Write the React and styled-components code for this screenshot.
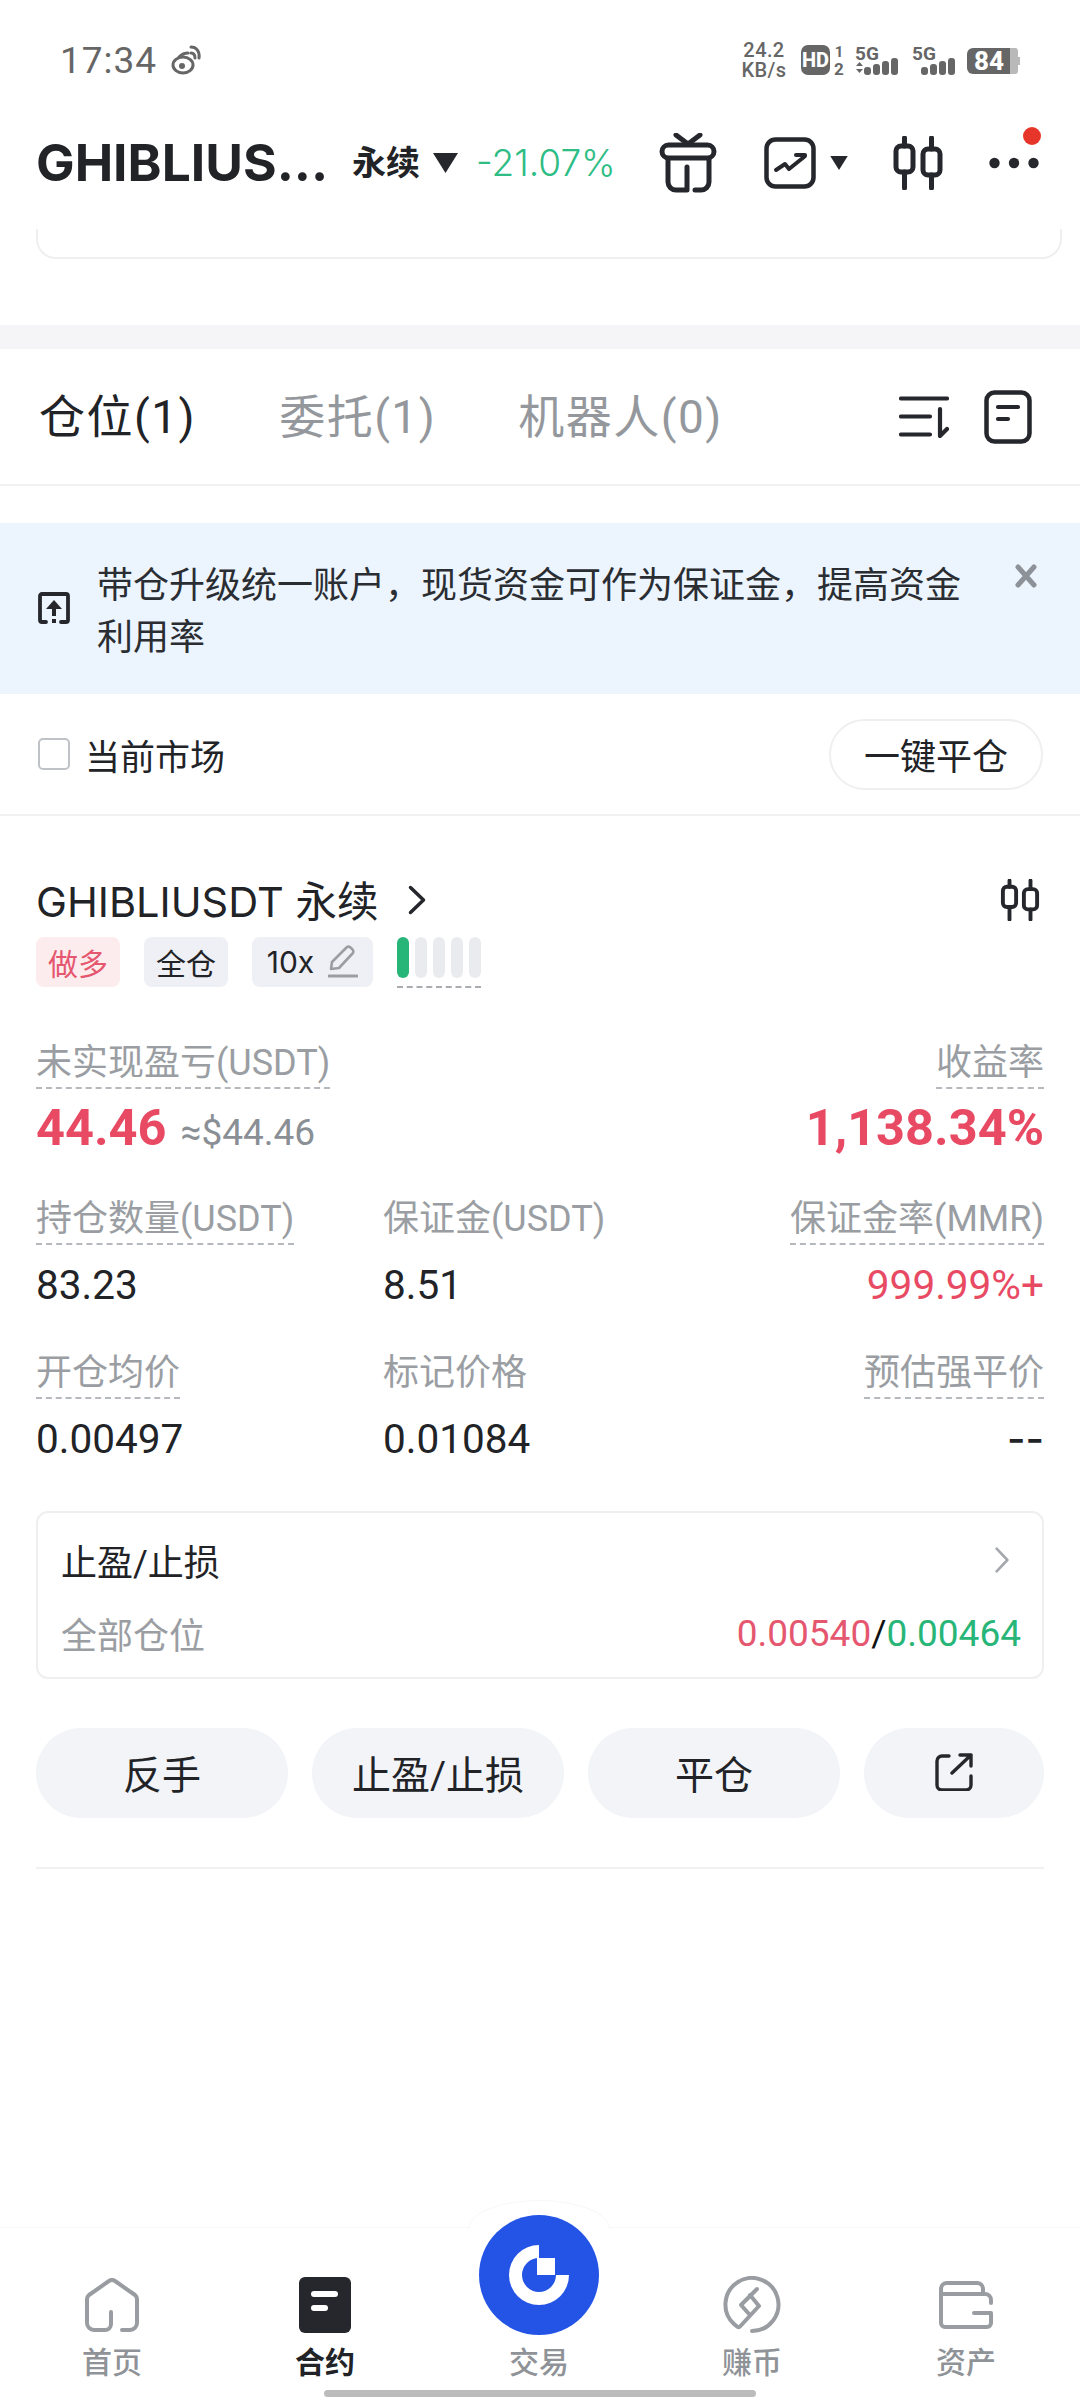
import React from "react";
import styled, { createGlobalStyle } from "styled-components";

const Global = createGlobalStyle`
  html, body { margin: 0; padding: 0; background: #fff; }
  * { box-sizing: border-box; }
  body { font-family: Roboto, "Noto Sans CJK SC", "Liberation Sans", sans-serif; color: #212327; }
`;

const inter = `Inter, "Noto Sans CJK SC", sans-serif`;

const Page = styled.div`
  width: 1080px;
  height: 2400px;
  position: relative;
  overflow: hidden;
  display: flex;
  flex-direction: column;
  background: #fff;
`;

/* status bar */
const StatusBar = styled.div`
  height: 116px;
  padding: 4px 59px 0 60px;
  display: flex;
  align-items: center;
  justify-content: space-between;
  color: #666;
`;
const Clock = styled.div`
  display: flex;
  align-items: center;
  gap: 14px;
  font-size: 37px;
  letter-spacing: 1px;
`;
const StatusRight = styled.div`
  display: flex;
  align-items: center;
`;
const NetSpeed = styled.div`
  width: 46px;
  margin-right: 14px;
  text-align: center;
  font-size: 20px;
  font-weight: 500;
  line-height: 20px;
  white-space: nowrap;
  letter-spacing: 0.4px;
`;

/* header */
const Header = styled.div`
  height: 100px;
  padding: 0 41px 0 36px;
  display: flex;
  align-items: center;
  margin-top: -3px;
  position: relative;
`;
const Symbol = styled.div`
  width: 290px;
  margin-top: -2px;
  font-family: ${inter};
  font-size: 51.5px;
  font-weight: 700;
  white-space: nowrap;
`;
const Perp = styled.div`
  margin-left: 26px;
  margin-top: -5px;
  font-size: 34px;
  font-weight: 600;
  white-space: nowrap;
`;
const Change = styled.div`
  margin-left: 17px;
  margin-top: -2px;
  width: 140px;
  font-family: ${inter};
  font-size: 37px;
  color: #2ebd85;
  white-space: nowrap;
  font-weight: 300;
`;
const HeaderIcons = styled.div`
  margin-left: auto;
  display: flex;
  align-items: center;
`;
const Spacer = styled.span`
  width: ${(p) => p.$w}px;
`;
const Notify = styled.span`
  position: absolute;
  left: 1023px;
  top: 14px;
  width: 18px;
  height: 18px;
  border-radius: 50%;
  background: #e6352b;
`;

/* remains of card scrolled under the header */
const ScrolledCard = styled.div`
  margin: 16px 18px 0 36px;
  height: 30px;
  border: 2px solid #eeeff1;
  border-top: 0;
  border-radius: 0 0 20px 20px;
`;
const Band = styled.div`
  margin-top: 66px;
  height: 24px;
  background: #f5f5f7;
`;

/* tabs */
const Tabs = styled.div`
  height: 137px;
  padding: 0 48px 0 39px;
  display: flex;
  align-items: center;
  border-bottom: 2px solid #f0f1f3;
`;
const Tab = styled.div`
  font-size: 46px;
  letter-spacing: 1.5px;
  margin-top: -8px;
  margin-right: ${(p) => p.$gap}px;
  color: ${(p) => (p.$active ? "#212327" : "#94989d")};
  white-space: nowrap;
`;
const TabIcons = styled.div`
  margin-left: auto;
  display: flex;
  align-items: center;
  gap: 35px;
`;

/* banner */
const Banner = styled.div`
  margin-top: 37px;
  height: 171px;
  padding: 37px 42px 0 38px;
  background: #ecf4fd;
  display: flex;
  position: relative;
`;
const BannerIcon = styled.div`
  width: 59px;
  flex: none;
  padding-top: 32px;
`;
const BannerText = styled.div`
  width: 880px;
  font-size: 36px;
  line-height: 52px;
  color: #2a2d32;
`;
const CloseBtn = styled.div`
  position: absolute;
  left: 1014px;
  top: 41px;
  line-height: 0;
`;

/* filter */
const FilterRow = styled.div`
  height: 122px;
  padding: 0 37px 0 38px;
  display: flex;
  align-items: center;
  border-bottom: 2px solid #f0f1f3;
`;
const Check = styled.span`
  width: 32px;
  height: 32px;
  border: 2.5px solid #bfc2c6;
  border-radius: 5px;
  margin-right: 15px;
`;
const CheckLabel = styled.span`
  font-size: 35px;
`;
const CloseAll = styled.div`
  margin-left: auto;
  width: 214px;
  height: 71px;
  border: 2px solid #eeeff1;
  border-radius: 36px;
  display: flex;
  align-items: center;
  justify-content: center;
  font-size: 36px;
`;

/* position */
const Position = styled.div`
  padding: 0 36px;
`;
const PosHead = styled.div`
  height: 70px;
  margin-top: 49px;
  display: flex;
  align-items: center;
`;
const PosName = styled.div`
  font-family: ${inter};
  font-size: 41.5px;
  margin-top: -2px;
  white-space: nowrap;
`;
const PosIcon = styled.span`
  margin-left: auto;
  margin-right: 4px;
  line-height: 0;
`;
const TagRow = styled.div`
  margin-top: 2px;
  height: 50px;
  display: flex;
  align-items: flex-start;
`;
const Tag = styled.div`
  height: 50px;
  width: ${(p) => p.$w}px;
  margin-right: 24px;
  border-radius: 8px;
  background: ${(p) => (p.$red ? "#fdecee" : "#eff0f5")};
  color: ${(p) => (p.$red ? "#e5566f" : "#212327")};
  font-family: ${inter};
  font-size: 30px;
  display: flex;
  align-items: center;
  justify-content: center;
  gap: 14px;
`;
const Meter = styled.div`
  width: 84px;
  height: 51px;
  padding-bottom: 8px;
  display: flex;
  gap: 6px;
  border-bottom: 2px dashed #a8abaf;
`;
const MeterBar = styled.span`
  width: 12px;
  border-radius: 6px;
  background: ${(p) => (p.$on ? "#27b678" : "#e9ebee")};
`;

const StatsRow = styled.div`
  display: grid;
  grid-template-columns: ${(p) => p.$cols || "347px 1fr auto"};
  margin-top: ${(p) => p.$mt}px;
`;
const Stat = styled.div`
  display: flex;
  flex-direction: column;
  align-items: ${(p) => (p.$right ? "flex-end" : "flex-start")};
`;
const Label = styled.span`
  font-size: 36px;
  line-height: 42px;
  color: #9a9ea3;
  white-space: nowrap;
  padding-bottom: 3px;
  border-bottom: 2px ${(p) => (p.$plain ? "solid transparent" : "dashed #b5b8bc")};
`;
const Value = styled.span`
  margin-top: 17px;
  font-size: 40.5px;
  line-height: 46px;
  color: ${(p) => (p.$red ? "#e84a63" : "#212327")};
  white-space: nowrap;
`;
const DashValue = styled(Value)`
  font-family: ${inter};
  font-weight: 500;
  font-size: 40px;
`;
const BigValue = styled.div`
  margin-top: 11px;
  height: 56px;
  display: flex;
  align-items: baseline;
  line-height: 56px;
  gap: 14px;
  color: #e84a63;
  font-size: 50.5px;
  font-weight: 700;
  white-space: nowrap;
`;
const Fiat = styled.span`
  font-size: 37px;
  font-weight: 400;
  color: #8a8f95;
`;

/* TP/SL */
const TpSl = styled.div`
  margin-top: 49px;
  height: 168px;
  border: 2px solid #eeeff1;
  border-radius: 12px;
  padding: 24px 21px 0 23px;
`;
const TpRow = styled.div`
  display: flex;
  align-items: center;
  justify-content: space-between;
  height: 46px;
  margin-bottom: ${(p) => p.$mb || 0}px;
`;
const TpTitle = styled.span`
  font-size: 36px;
`;
const TpLabel = styled.span`
  font-size: 36px;
  color: #9a9ea3;
`;
const TpValues = styled.span`
  font-size: 37px;
  color: #111;
`;
const TpPrice = styled.span`
  color: ${(p) => p.$c};
`;
const TpArrow = styled.span`
  margin-right: 11px;
  line-height: 0;
`;

/* actions */
const Actions = styled.div`
  margin-top: 49px;
  display: grid;
  grid-template-columns: 252px 252px 252px 1fr;
  gap: 24px;
`;
const ActionBtn = styled.div`
  height: 90px;
  padding-bottom: 2px;
  border-radius: 45px;
  background: #f2f4f7;
  display: flex;
  align-items: center;
  justify-content: center;
  font-size: 39px;
  color: #212327;
`;
const Rule = styled.div`
  margin-top: 49px;
  height: 2px;
  background: #f0f1f3;
`;

/* nav */
const Nav = styled.div`
  position: absolute;
  left: 0;
  right: 0;
  bottom: 0;
  height: 173px;
  border-top: 1px solid #f7f7f8;
  background: #fff;
  display: grid;
  grid-template-columns: 224px 202px 226px 200px 228px;
`;
const NavItem = styled.div`
  display: flex;
  flex-direction: column;
  align-items: center;
  padding-top: ${(p) => p.$pt || 49}px;
`;
const IconSlot = styled.div`
  height: 56px;
  display: flex;
  align-items: center;
  margin-bottom: 12px;
`;
const NavLabel = styled.span`
  font-size: 30px;
  line-height: 36px;
  font-weight: ${(p) => (p.$active ? 600 : 500)};
  color: ${(p) => (p.$active ? "#212327" : "#8f9398")};
`;
const Bump = styled.div`
  position: absolute;
  left: 468px;
  top: -28px;
  width: 142px;
  height: 29px;
  background: #fff;
  border: 1px solid #f7f7f8;
  border-bottom: 0;
  border-radius: 71px 71px 0 0 / 29px 29px 0 0;
`;
const TradeFab = styled.div`
  position: absolute;
  left: 479px;
  top: -13px;
  width: 120px;
  height: 120px;
  border-radius: 50%;
  background: #2354e6;
  display: flex;
  align-items: center;
  justify-content: center;
`;
const HomeBar = styled.div`
  position: absolute;
  left: 324px;
  top: 2390px;
  width: 432px;
  height: 7px;
  border-radius: 4px;
  background: #bcbcbc;
`;

const ink = "#25272c";
const gray = "#999ca1";

const Weibo = () => (
  <svg width="32" height="32" viewBox="0 0 32 32" fill="none" stroke="#666" strokeWidth="3" strokeLinecap="round">
    <ellipse cx="12" cy="21" rx="10" ry="8" />
    <circle cx="11" cy="22" r="3" fill="#666" stroke="none" />
    <path d="M8 13c3-3 6-4 9-4M20 3c5 0 9 4 8 11M20 9c3 0 4 2 4 5" />
  </svg>
);

const SignalBars = ({ x }) => (
  <>
    <rect x={x} y="24" width="7" height="8" rx="3" />
    <rect x={x + 9} y="21" width="7" height="11" rx="3" />
    <rect x={x + 18} y="18" width="7" height="14" rx="3" />
    <rect x={x + 27} y="15" width="7" height="17" rx="3" />
  </>
);

const StatusIcons = () => (
  <svg width="220" height="38" viewBox="0 -2 220 38" style={{ display: "block" }}>
    <g fill="#666" fontFamily="Roboto">
      <rect x="0" y="2" width="29" height="30" rx="7" />
      <text x="14.5" y="24" textAnchor="middle" fontSize="20" fontWeight="800" fill="#fff">HD</text>
      <text x="38" y="14" textAnchor="middle" fontSize="15" fontWeight="700">1</text>
      <text x="38" y="32" textAnchor="middle" fontSize="17" fontWeight="700">2</text>
      <text x="54" y="17" fontSize="19" fontWeight="700">5G</text>
      <path d="M55 23l3.5-4 3.5 4zM55 26h7l-3.5 4z" />
      <SignalBars x={63} />
      <text x="111" y="17" fontSize="19" fontWeight="700">5G</text>
      <SignalBars x={120} />
      <path d="M166 11a6 6 0 0 1 6-6h37v26h-37a6 6 0 0 1-6-6z" />
      <path d="M209 5h5a3 3 0 0 1 3 3v6h2v8h-2v6a3 3 0 0 1-3 3h-5z" fill="#b9b9b9" />
      <text x="188" y="27" textAnchor="middle" fontSize="26" fontWeight="800" fill="#fff">84</text>
    </g>
  </svg>
);

const Triangle = ({ w, h, ml = 0 }) => (
  <svg width={w} height={h} viewBox="0 0 10 8" style={{ marginLeft: ml, flex: "none" }}>
    <path d="M0 0h10L5 8z" fill={ink} />
  </svg>
);

const Gift = () => (
  <svg width="58" height="60" viewBox="0 0 58 60" fill="none" stroke={ink} strokeWidth="5" strokeLinecap="round" strokeLinejoin="round">
    <path d="M17 2l12 9 12-9" />
    <rect x="3" y="12" width="52" height="13" rx="6.5" />
    <path d="M9 26v23a8 8 0 0 0 8 8h11V34M36 57h6a8 8 0 0 0 8-8V26" />
  </svg>
);

const TrendBox = () => (
  <svg width="52" height="52" viewBox="0 0 52 52" fill="none" stroke={ink} strokeLinecap="round" strokeLinejoin="round">
    <rect x="2.5" y="2.5" width="47" height="47" rx="9" strokeWidth="4.5" />
    <path d="M12 33l9-6 4 5 15-12" strokeWidth="4" />
    <path d="M32 18h9v1" strokeWidth="4" />
  </svg>
);

const Candles = ({ w = 50, h = 54 }) => (
  <svg width={w} height={h} viewBox="0 0 50 54" fill="none" stroke={ink} strokeWidth="5" strokeLinecap="round" strokeLinejoin="round">
    <rect x="3" y="10" width="17" height="26" rx="5" />
    <path d="M11.5 2v8M11.5 36v16" />
    <rect x="30" y="13" width="17" height="26" rx="5" />
    <path d="M38.5 2v11M38.5 39v13" />
  </svg>
);

const Dots = () => (
  <svg width="50" height="12" viewBox="0 0 50 12">
    <circle cx="5.5" cy="6" r="5.2" fill={ink} />
    <circle cx="25" cy="6" r="5.2" fill={ink} />
    <circle cx="44.5" cy="6" r="5.2" fill={ink} />
  </svg>
);

const SortIcon = () => (
  <svg width="50" height="42" viewBox="0 0 50 42" fill="none" stroke={ink} strokeWidth="4.2" strokeLinecap="round" strokeLinejoin="round">
    <path d="M2 2.5h46M2 20.5h29M2 38.5h29" />
    <path d="M41 13v27l7-7" />
  </svg>
);

const NoteIcon = () => (
  <svg width="48" height="54" viewBox="0 0 48 54" fill="none" stroke={ink} strokeLinecap="round">
    <rect x="2.5" y="2.5" width="43" height="49" rx="8" strokeWidth="4.5" />
    <path d="M14 17h20M14 29h10" strokeWidth="4.2" />
  </svg>
);

const UpgradeIcon = () => (
  <svg width="32" height="32" viewBox="0 0 32 32" fill="none" stroke={ink} strokeLinejoin="round">
    <path d="M8 30H4a2 2 0 0 1-2-2V4a2 2 0 0 1 2-2h24a2 2 0 0 1 2 2v24a2 2 0 0 1-2 2h-5" strokeWidth="3.8" strokeLinecap="round" />
    <path d="M16 8l8 9H8z" fill={ink} stroke="none" />
    <path d="M16 16v8M16 27v4" strokeWidth="4" />
  </svg>
);

const CloseIcon = () => (
  <svg width="24" height="24" viewBox="0 0 24 24" fill="none" stroke="#8d9299" strokeWidth="5" strokeLinecap="round">
    <path d="M4 3l16 18M20 3L4 21" />
  </svg>
);

const Chevron = ({ w, h, c, sw, ml = 0 }) => (
  <svg width={w} height={h} viewBox={`0 0 ${w} ${h}`} fill="none" stroke={c} strokeWidth={sw} strokeLinecap="round" strokeLinejoin="round" style={{ marginLeft: ml, flex: "none" }}>
    <path d={`M${sw} ${sw}L${w - sw} ${h / 2}L${sw} ${h - sw}`} />
  </svg>
);

const Pencil = () => (
  <svg width="30" height="34" viewBox="0 0 30 34" fill="none" stroke="#9a9ea3" strokeLinecap="round" strokeLinejoin="round">
    <path d="M3 24l1-7L18 3a3 3 0 0 1 5 0l1 1a3 3 0 0 1 0 5L11 23z" strokeWidth="2.6" />
    <path d="M1 31h28" strokeWidth="3" />
  </svg>
);

const ShareIcon = () => (
  <svg width="38" height="38" viewBox="0 0 38 38" fill="none" stroke={ink} strokeWidth="3.4" strokeLinecap="round" strokeLinejoin="round">
    <path d="M14 3H7a5 5 0 0 0-5 5v24a5 5 0 0 0 5 5h24a5 5 0 0 0 5-5v-9" />
    <path d="M17 20L36 2M25 2h11v11" />
  </svg>
);

const HomeIcon = () => (
  <svg width="54" height="54" viewBox="0 0 54 54" fill="none" stroke={gray} strokeWidth="4" strokeLinecap="round" strokeLinejoin="round">
    <path d="M37 52h8a7 7 0 0 0 7-7V22a6 6 0 0 0-2-5L30 3a5 5 0 0 0-6 0L4 17a6 6 0 0 0-2 5v23a7 7 0 0 0 7 7h11a6 6 0 0 0 6-6V34" />
  </svg>
);

const ContractIcon = () => (
  <svg width="52" height="56" viewBox="0 0 52 56">
    <rect width="52" height="56" rx="6" fill={ink} />
    <rect x="12" y="14" width="27" height="6" rx="3" fill="#fff" />
    <rect x="12" y="28" width="17" height="6" rx="3" fill="#fff" />
  </svg>
);

const EarnIcon = () => (
  <svg width="58" height="58" viewBox="0 0 58 58" fill="none" stroke={gray} strokeWidth="4" strokeLinecap="round" strokeLinejoin="round">
    <path d="M29 55A26.5 26.5 0 1 0 11 48l3 2.5a2 2 0 0 0 3 0L36 30 27 19" />
    <path d="M34 13L18 29l8 9" />
  </svg>
);

const WalletIcon = () => (
  <svg width="54" height="48" viewBox="0 0 54 48" fill="none" stroke={gray} strokeWidth="4" strokeLinecap="round" strokeLinejoin="round">
    <path d="M2 13V8a6 6 0 0 1 6-6h30a6 6 0 0 1 6 6v5" />
    <path d="M2 13h44a6 6 0 0 1 6 6v3" />
    <path d="M35 32h17v10a4 4 0 0 1-4 4H6a4 4 0 0 1-4-4V13" />
  </svg>
);

const TradeLogo = () => (
  <svg width="60" height="60" viewBox="0 0 60 60">
    <path fill="#fff" d="M30 0A30 30 0 1 0 60 30H47A17 17 0 1 1 30 13Z" />
    <rect x="28" y="13" width="18" height="17" fill="#fff" />
  </svg>
);

const stats2 = [
  ["持仓数量(USDT)", "83.23"],
  ["保证金(USDT)", "8.51", true],
  ["保证金率(MMR)", "999.99%+"],
];
const stats3 = [
  ["开仓均价", "0.00497"],
  ["标记价格", "0.01084", true],
  ["预估强平价", "--"],
];

const StatCell = ({ item, index }) => {
  const Shown = item[1] === "--" ? DashValue : Value;
  return (
    <Stat $right={index === 2}>
      <Label $plain={item[2]}>{item[0]}</Label>
      <Shown $red={item[1].endsWith("+")}>{item[1]}</Shown>
    </Stat>
  );
};

export default function App() {
  return (
    <Page>
      <Global />
      <StatusBar>
        <Clock>17:34 <Weibo /></Clock>
        <StatusRight>
          <NetSpeed>24.2<br />KB/s</NetSpeed>
          <StatusIcons />
        </StatusRight>
      </StatusBar>
      <Header>
        <Symbol>GHIBLIUS...</Symbol>
        <Perp>永续</Perp>
        <Triangle w={27} h={20} ml={12} />
        <Change>-21.07%</Change>
        <HeaderIcons>
          <Gift />
          <Spacer $w={47} />
          <TrendBox />
          <Triangle w={18} h={14} ml={14} />
          <Spacer $w={45} />
          <Candles />
          <Spacer $w={46} />
          <Dots />
        </HeaderIcons>
        <Notify />
      </Header>
      <ScrolledCard />
      <Band />
      <Tabs>
        <Tab $active $gap={83}>仓位(1)</Tab>
        <Tab $gap={82}>委托(1)</Tab>
        <Tab $gap={0}>机器人(0)</Tab>
        <TabIcons>
          <SortIcon />
          <NoteIcon />
        </TabIcons>
      </Tabs>
      <Banner>
        <BannerIcon><UpgradeIcon /></BannerIcon>
        <BannerText>带仓升级统一账户，现货资金可作为保证金，提高资金利用率</BannerText>
        <CloseBtn><CloseIcon /></CloseBtn>
      </Banner>
      <FilterRow>
        <Check />
        <CheckLabel>当前市场</CheckLabel>
        <CloseAll>一键平仓</CloseAll>
      </FilterRow>
      <Position>
        <PosHead>
          <PosName>GHIBLIUSDT 永续</PosName>
          <Chevron w={20} h={32} c={ink} sw={3.5} ml={29} />
          <PosIcon><Candles w={40} h={42} /></PosIcon>
        </PosHead>
        <TagRow>
          <Tag $red $w={84}>做多</Tag>
          <Tag $w={84}>全仓</Tag>
          <Tag $w={121}>10x <Pencil /></Tag>
          <Meter>
            <MeterBar $on />
            <MeterBar />
            <MeterBar />
            <MeterBar />
            <MeterBar />
          </Meter>
        </TagRow>
        <StatsRow $mt={55} $cols="1fr auto">
          <Stat>
            <Label>未实现盈亏(USDT)</Label>
            <BigValue>44.46 <Fiat>≈$44.46</Fiat></BigValue>
          </Stat>
          <Stat $right>
            <Label>收益率</Label>
            <BigValue>1,138.34%</BigValue>
          </Stat>
        </StatsRow>
        <StatsRow $mt={42}>
          {stats2.map((s, i) => <StatCell key={s[0]} item={s} index={i} />)}
        </StatsRow>
        <StatsRow $mt={44}>
          {stats3.map((s, i) => <StatCell key={s[0]} item={s} index={i} />)}
        </StatsRow>
        <TpSl>
          <TpRow $mb={27}>
            <TpTitle>止盈/止损</TpTitle>
            <TpArrow><Chevron w={16} h={28} c="#a4a8ac" sw={2.6} /></TpArrow>
          </TpRow>
          <TpRow>
            <TpLabel>全部仓位</TpLabel>
            <TpValues>
              <TpPrice $c="#e5566f">0.00540</TpPrice>/<TpPrice $c="#27b678">0.00464</TpPrice>
            </TpValues>
          </TpRow>
        </TpSl>
        <Actions>
          <ActionBtn>反手</ActionBtn>
          <ActionBtn>止盈/止损</ActionBtn>
          <ActionBtn>平仓</ActionBtn>
          <ActionBtn><ShareIcon /></ActionBtn>
        </Actions>
        <Rule />
      </Position>
      <Nav>
        <Bump />
        <NavItem><IconSlot><HomeIcon /></IconSlot><NavLabel>首页</NavLabel></NavItem>
        <NavItem><IconSlot><ContractIcon /></IconSlot><NavLabel $active>合约</NavLabel></NavItem>
        <NavItem $pt={117}><NavLabel>交易</NavLabel></NavItem>
        <NavItem><IconSlot><EarnIcon /></IconSlot><NavLabel>赚币</NavLabel></NavItem>
        <NavItem><IconSlot><WalletIcon /></IconSlot><NavLabel>资产</NavLabel></NavItem>
        <TradeFab><TradeLogo /></TradeFab>
      </Nav>
      <HomeBar />
    </Page>
  );
}
